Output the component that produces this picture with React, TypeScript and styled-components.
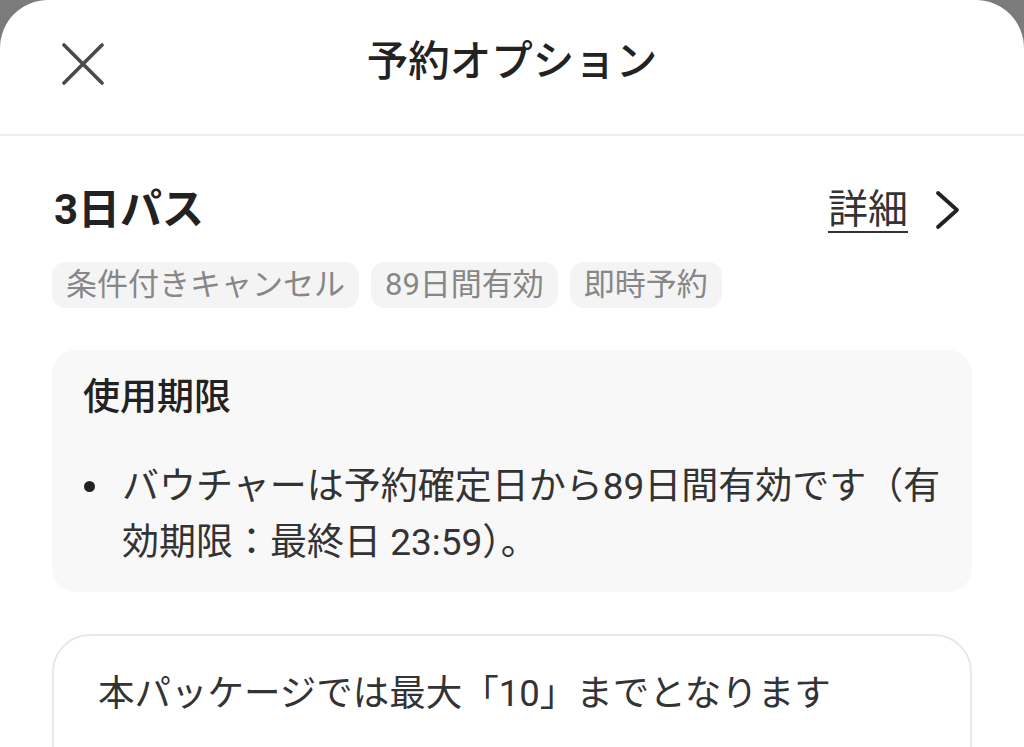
import React from "react";
import styled, { createGlobalStyle } from "styled-components";

const Global = createGlobalStyle`
  html, body {
    margin: 0;
    padding: 0;
    background: #7b7b7b;
  }
  body {
    font-family: Roboto, "Noto Sans CJK JP", sans-serif;
    color: #222;
    -webkit-font-smoothing: antialiased;
  }
`;

const Sheet = styled.div`
  background: #fff;
  border-radius: 48px 48px 0 0;
  height: 747px;
  overflow: hidden;
  display: flex;
  flex-direction: column;
`;

const Header = styled.header`
  height: 134px;
  flex: none;
  border-bottom: 2px solid #eeeeee;
  display: grid;
  grid-template-columns: 1fr auto 1fr;
  align-items: center;
  padding: 0 62px;
`;

const CloseButton = styled.button`
  justify-self: start;
  width: 42px;
  height: 42px;
  padding: 0;
  margin-top: -6px;
  border: none;
  background: none;
  display: flex;
  cursor: pointer;
`;

const Title = styled.h1`
  margin: 0;
  margin-top: -10px;
  font-size: 41.5px;
  font-weight: 500;
  line-height: 56px;
  color: #222;
`;

const Body = styled.main`
  padding: 46px 52px 0;
  display: flex;
  flex-direction: column;
`;

const ProductRow = styled.div`
  height: 56px;
  display: flex;
  align-items: center;
  justify-content: space-between;
`;

const ProductName = styled.h2`
  margin: 0 0 0 2px;
  font-size: 42px;
  font-weight: 700;
  line-height: 56px;
  color: #222;
`;

const DetailLink = styled.a`
  display: flex;
  align-items: center;
  gap: 26px;
  color: #333;
  text-decoration: none;
  margin-right: 10px;
`;

const DetailText = styled.span`
  font-size: 40px;
  line-height: 56px;
  text-decoration: underline;
  text-decoration-thickness: 2px;
  text-underline-offset: 8px;
`;

const Tags = styled.div`
  margin-top: 24px;
  display: flex;
  gap: 12px;
`;

const Tag = styled.span`
  height: 46px;
  padding: 0 14px;
  border-radius: 14px;
  background: #f4f4f4;
  color: #878787;
  font-size: 31px;
  line-height: 46px;
  white-space: nowrap;
`;

const InfoBox = styled.section`
  margin-top: 42px;
  background: #f8f8f8;
  border-radius: 24px;
  padding: 24px 31px 21px;
`;

const InfoTitle = styled.h3`
  margin: 0;
  font-size: 37px;
  font-weight: 500;
  line-height: 48px;
  color: #222;
`;

const BulletList = styled.ul`
  margin: 37px 0 0;
  padding: 0;
  list-style: none;
`;

const BulletItem = styled.li`
  position: relative;
  padding-left: 39px;
  font-size: 37px;
  line-height: 56px;
  color: #333;

  &::before {
    content: "";
    position: absolute;
    left: 1px;
    top: 22px;
    width: 11px;
    height: 11px;
    border-radius: 50%;
    background: #222;
  }
`;

const LimitCard = styled.section`
  margin-top: 42px;
  border: 2px solid #e8e8e8;
  border-radius: 38px;
  padding: 30px 44px 40px;
  height: 200px;
`;

const LimitText = styled.p`
  margin: 0;
  font-size: 36.5px;
  line-height: 56px;
  color: #333;
`;

const CloseIcon = () => (
  <svg width="42" height="42" viewBox="0 0 42 42" fill="none">
    <path
      d="M2 2 L40 40 M40 2 L2 40"
      stroke="#4a4a4a"
      strokeWidth="3.6"
      strokeLinecap="round"
    />
  </svg>
);

const ChevronIcon = () => (
  <svg width="28" height="40" viewBox="0 0 28 40" fill="none">
    <path
      d="M4 3 L23 20 L4 37"
      stroke="#222"
      strokeWidth="3.8"
      strokeLinecap="round"
      strokeLinejoin="round"
    />
  </svg>
);

export default function App() {
  const tags = ["条件付きキャンセル", "89日間有効", "即時予約"];
  return (
    <>
      <Global />
      <Sheet>
        <Header>
          <CloseButton aria-label="閉じる">
            <CloseIcon />
          </CloseButton>
          <Title>予約オプション</Title>
          <span />
        </Header>
        <Body>
          <ProductRow>
            <ProductName>3日パス</ProductName>
            <DetailLink href="#">
              <DetailText>詳細</DetailText>
              <ChevronIcon />
            </DetailLink>
          </ProductRow>
          <Tags>
            {tags.map((t) => (
              <Tag key={t}>{t}</Tag>
            ))}
          </Tags>
          <InfoBox>
            <InfoTitle>使用期限</InfoTitle>
            <BulletList>
              <BulletItem>
                バウチャーは予約確定日から89日間有効です（有効期限：最終日 23:59）。
              </BulletItem>
            </BulletList>
          </InfoBox>
          <LimitCard>
            <LimitText>本パッケージでは最大「10」までとなります</LimitText>
          </LimitCard>
        </Body>
      </Sheet>
    </>
  );
}
